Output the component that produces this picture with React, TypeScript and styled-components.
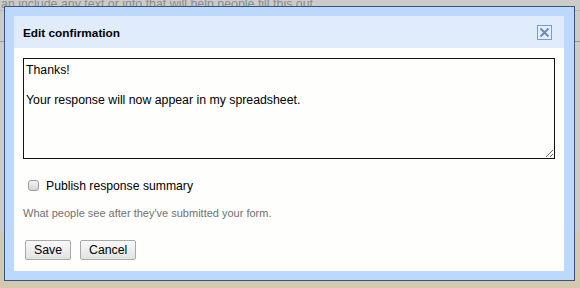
import React from 'react';
import styled, { createGlobalStyle } from 'styled-components';

const GlobalStyle = createGlobalStyle`
	html, body {
		margin: 0;
		padding: 0;
		width: 580px;
		height: 288px;
		overflow: hidden;
		font-family: "Liberation Sans", Arial, sans-serif;
	}
`;

const Page = styled.div`
	position: relative;
	width: 580px;
	height: 288px;
	display: flex;
	flex-direction: column;
	background: #cbcbc9;
	overflow: hidden;
`;

const Hint = styled.div`
	height: 12px;
	margin-top: -2px;
	margin-left: 1px;
	font-size: 12.4px;
	line-height: 12px;
	color: #8c8c8c;
	white-space: nowrap;
`;

const GreyArea = styled.div`
	flex: 1;
	border-top: 1px solid #b8b8b8;
	display: flex;
	flex-direction: column;
	padding-top: 30px;
`;

const Rule = styled.div`
	height: 1px;
	background: #9a9a9a;
`;

const Beige = styled.div`
	height: 56px;
	background: #d4c9ae;
`;

const Dialog = styled.div`
	position: absolute;
	left: 4px;
	top: 6px;
	width: 550px;
	height: 255px;
	border: 1px solid #37537f;
	padding: 9px 10px 9px 9px;
	background: #bcd8fd;
	display: flex;
	flex-direction: column;
`;

const Header = styled.div`
	height: 32px;
	background: #e0ebfc;
	display: flex;
	align-items: center;
	justify-content: space-between;
	padding: 0 12px 0 9px;
`;

const Title = styled.span`
	font-size: 11.8px;
	font-weight: bold;
	color: #000;
	margin-top: 1px;
`;

const Close = styled.button`
	width: 15px;
	height: 15px;
	padding: 0;
	border: 1px solid #7d9ac4;
	background: #e6eefb;
	display: flex;
	align-items: center;
	justify-content: center;
	margin-top: 1px;
`;

const Body = styled.div`
	flex: 1;
	background: #fefefd;
	padding: 10px 9px 0 9px;
	display: flex;
	flex-direction: column;
`;

const Message = styled.textarea`
	box-sizing: border-box;
	width: 532px;
	height: 101px;
	margin: 0;
	padding: 4px 2px;
	border: 1px solid #111;
	background: #fefefd;
	font-family: "Liberation Sans", Arial, sans-serif;
	font-size: 12.3px;
	line-height: 15px;
	color: #000;
	resize: both;
	outline: none;
`;

const CheckRow = styled.label`
	display: flex;
	align-items: center;
	gap: 7px;
	margin: 20px 0 0 5px;
	font-size: 12.2px;
	color: #000;
`;

const Box = styled.span`
	width: 9px;
	height: 9px;
	margin-top: -1px;
	border: 1px solid #9a9a9a;
	border-radius: 3px;
	background: linear-gradient(#f4f4f4, #d6d6d6);
`;

const Help = styled.div`
	margin-top: 14px;
	font-size: 11px;
	color: #717171;
`;

const Actions = styled.div`
	display: flex;
	gap: 9px;
	margin: 21px 0 0 2px;
`;

const Button = styled.button`
	height: 20px;
	padding: 0 8px;
	border: 1px solid #a9a9a9;
	border-radius: 2px;
	background: linear-gradient(#f9f9f9, #e2e2e2);
	font-family: "Liberation Sans", Arial, sans-serif;
	font-size: 12.3px;
	color: #000;
`;

function App() {
	return (
		<Page>
			<GlobalStyle />
			<Hint>an include any text or info that will help people fill this out</Hint>
			<GreyArea>
				<Rule />
			</GreyArea>
			<Beige />
			<Dialog>
				<Header>
					<Title>Edit confirmation</Title>
					<Close aria-label="Close">
						<svg width="11" height="11" viewBox="0 0 11 11">
							<path d="M1.5 1.5 L9.5 9.5 M9.5 1.5 L1.5 9.5" stroke="#6a8cb8" strokeWidth="2" />
						</svg>
					</Close>
				</Header>
				<Body>
					<Message readOnly defaultValue={"Thanks!\n\nYour response will now appear in my spreadsheet."} />
					<CheckRow>
						<Box />
						Publish response summary
					</CheckRow>
					<Help>What people see after they've submitted your form.</Help>
					<Actions>
						<Button>Save</Button>
						<Button>Cancel</Button>
					</Actions>
				</Body>
			</Dialog>
		</Page>
	);
}

export default App;
